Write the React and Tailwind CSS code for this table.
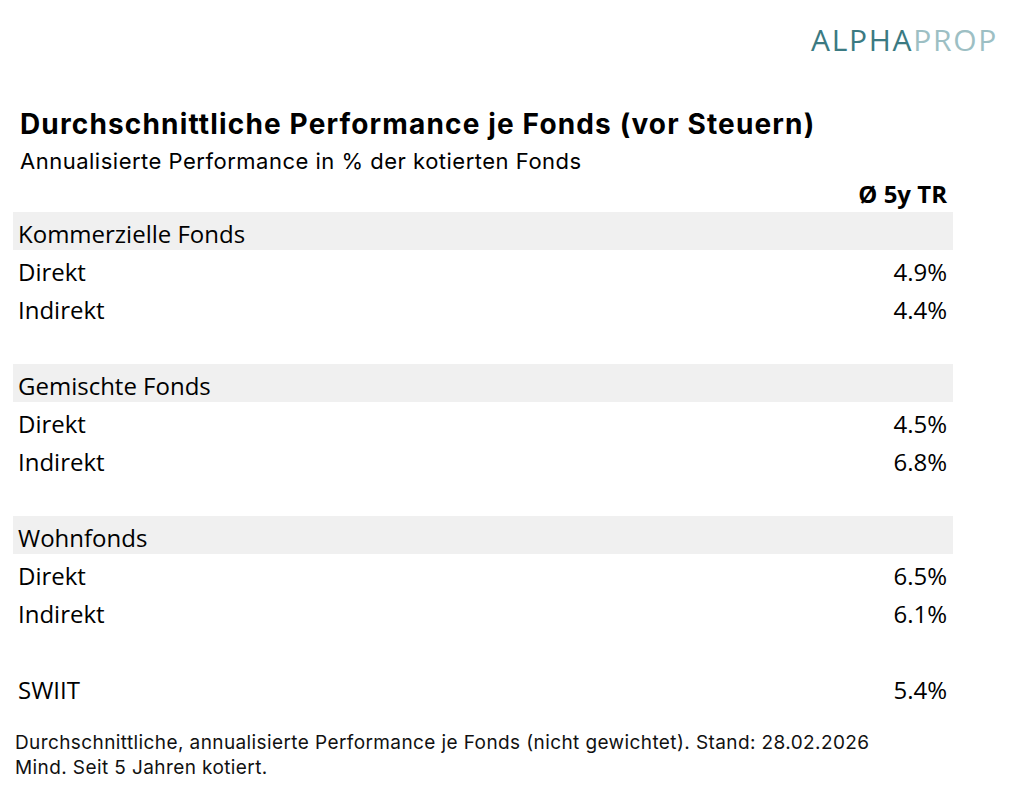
import React from "react";

const rows = [
  { label: "Kommerzielle Fonds", head: true },
  { label: "Direkt", val: "4.9%" },
  { label: "Indirekt", val: "4.4%" },
  { blank: true },
  { label: "Gemischte Fonds", head: true },
  { label: "Direkt", val: "4.5%" },
  { label: "Indirekt", val: "6.8%" },
  { blank: true },
  { label: "Wohnfonds", head: true },
  { label: "Direkt", val: "6.5%" },
  { label: "Indirekt", val: "6.1%" },
  { blank: true },
  { label: "SWIIT", val: "5.4%" },
];

const App = () => {
  return (
    <div className="w-[1024px] h-[794px] bg-white text-black relative overflow-hidden">
      {/* Logo */}
      <div className="flex justify-end pt-[25px] pr-[26px]">
        <div className="font-['Open_Sans',sans-serif] font-medium text-[30px] leading-none tracking-[1.7px]">
          <span className="text-[#3b7a82]">ALPHA</span>
          <span className="text-[#9dbfc4]">PROP</span>
        </div>
      </div>

      <div className="pl-[20px] pt-[51px]">
        <h1 className="font-['Inter',sans-serif] font-bold text-[28px] leading-[36px] tracking-[1.15px]">
          Durchschnittliche Performance je Fonds (vor Steuern)
        </h1>
        <p className="mt-[6px] font-['Inter',sans-serif] text-[22px] leading-[26px] tracking-[0.5px]">
          Annualisierte Performance in % der kotierten Fonds
        </p>
      </div>

      <div className="w-[940px] ml-[13px] mt-[2px] font-['Open_Sans',sans-serif] text-[24px]">
        <div className="h-[36px] flex items-center justify-end pr-[6px] font-bold">
          Ø 5y TR
        </div>
        {rows.map((r, i) =>
          r.blank ? (
            <div key={i} className="h-[38px]" />
          ) : (
            <div
              key={i}
              className={`h-[38px] flex items-center justify-between pl-[5px] pr-[6px] pt-[5px] ${
                r.head ? "bg-[#f0f0f0]" : ""
              }`}
            >
              <span>{r.label}</span>
              {r.val && <span>{r.val}</span>}
            </div>
          )
        )}
      </div>

      <div className="pl-[15px] pt-[24px] font-['Inter',sans-serif] text-[19px] leading-[25px] tracking-[0.4px] text-[#111]">
        <p>Durchschnittliche, annualisierte Performance je Fonds (nicht gewichtet). Stand: 28.02.2026</p>
        <p>Mind. Seit 5 Jahren kotiert.</p>
      </div>
    </div>
  );
};

export default App;
